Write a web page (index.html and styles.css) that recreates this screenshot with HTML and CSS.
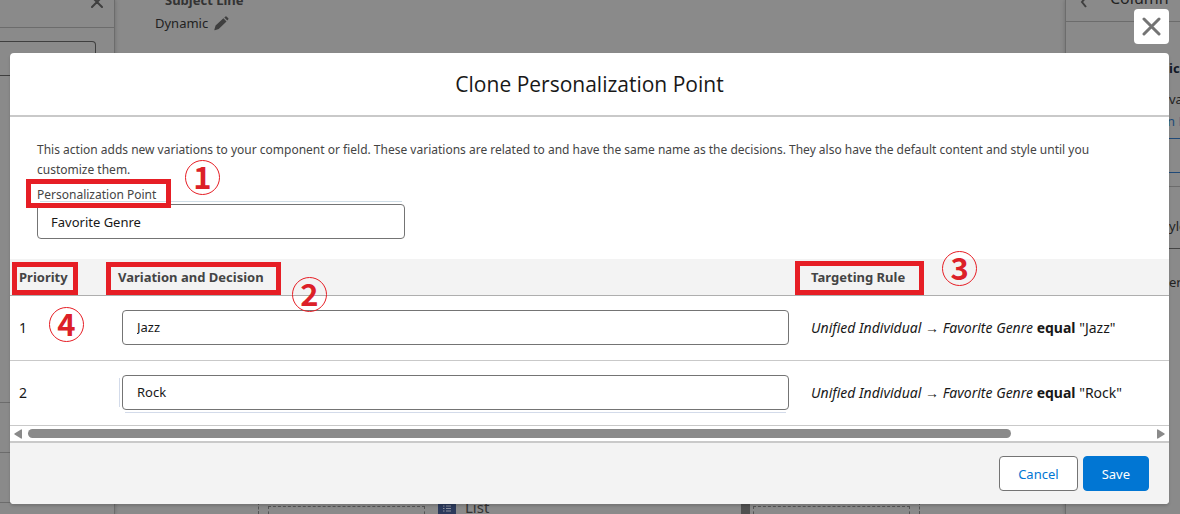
FILE: index.html
```html
<!DOCTYPE html>
<html lang="en">
<head>
<meta charset="utf-8">
<title>Clone Personalization Point</title>
<link rel="stylesheet" href="styles.css">
</head>
<body>
<div class="app">
  <aside class="left-panel">
    <div class="left-head">
      <svg class="left-close" width="12" height="12" viewBox="0 0 12 12"><path d="M1 1L11 11M11 1L1 11" stroke="#3f3f3f" stroke-width="2" stroke-linecap="round"/></svg>
    </div>
    <div class="left-search"></div>
    <div class="left-list"><div class="left-item"></div><div class="left-item"></div></div>
  </aside>
  <section class="canvas">
    <div class="subject">
      <div class="subject-title">Subject Line</div>
      <div class="subject-value">Dynamic
        <svg width="15" height="15" viewBox="0 0 15 15" fill="#3f3f3f"><path d="M1.600 9.600L9.400 2.300L12.500 5.400L4.700 13L.8 14.200Q.2 14.300.4 13.600ZM10.300 1.400L11.500.4Q12 0 12.500.5L14.300 2.300Q14.800 2.800 14.300 3.300L13.300 4.500Z"/></svg>
      </div>
    </div>
    <div class="blocks">
      <div class="block block-first"><div class="block-inner"></div></div>
      <div class="list-block">
        <svg width="18" height="18" viewBox="0 0 18 18"><rect width="18" height="18" rx="1" fill="#2c3a5c"/><path d="M5 4H6.500M8 4H13M5 6.500H6.500M8 6.500H13M5 9H6.500M8 9H13" stroke="#8a8f9c"/></svg>
        <span>List</span>
      </div>
      <div class="canvas-scroll"></div>
      <div class="block block-last"><div class="block-inner"></div></div>
    </div>
  </section>
  <aside class="right-panel">
    <div class="right-head">
      <svg width="8" height="12" viewBox="0 0 8 12"><path d="M6 1L2 6L6 11" fill="none" stroke="#3f3f3f" stroke-width="2"/></svg>
      <span>Column</span>
    </div>
    <div class="right-body">
      <div class="frag frag-bold">ic</div>
      <div class="frag">va</div>
      <div class="frag frag-link">n M</div>
      <div class="right-field"></div>
      <div class="right-section"><div class="frag">yle</div></div>
      <div class="right-section right-last"><div class="frag">er</div></div>
    </div>
  </aside>
</div>

<div class="stage">
  <div class="modal" role="dialog" aria-labelledby="title">
    <button class="close" type="button" aria-label="Close">
      <svg width="19" height="19" viewBox="0 0 19 19"><path d="M2 2L17 17M17 2L2 17" stroke="#747474" stroke-width="3" stroke-linecap="round"/></svg>
    </button>
    <header class="modal-head"><h1 id="title">Clone Personalization Point</h1></header>
    <div class="intro">
      <p>This action adds new variations to your component or field. These variations are related to and have the same name as the decisions. They also have the default content and style until you customize them.</p>
      <div class="label-row"><label class="mark mark-label" for="point">Personalization Point</label><span class="ring ring-1">1</span></div>
      <div class="point-field"><input id="point" class="text-box" type="text" value="Favorite Genre"></div>
    </div>
    <table class="rules">
      <colgroup><col class="col-priority"><col class="col-variation"><col></colgroup>
      <thead>
        <tr>
          <th><span class="mark mark-priority">Priority</span><span class="ring ring-4">4</span></th>
          <th><span class="mark mark-variation">Variation and Decision</span><span class="ring ring-2">2</span></th>
          <th><span class="mark mark-rule">Targeting Rule</span><span class="ring ring-3">3</span></th>
        </tr>
      </thead>
      <tbody>
        <tr>
          <td>1</td>
          <td class="cell-input"><input class="text-box" type="text" aria-label="Variation 1" value="Jazz"></td>
          <td><em>Unified Individual → Favorite Genre</em> <strong>equal</strong> "Jazz"</td>
        </tr>
        <tr>
          <td>2</td>
          <td class="cell-input"><div class="ghost"><input class="text-box" type="text" aria-label="Variation 2" value="Rock"></div></td>
          <td><em>Unified Individual → Favorite Genre</em> <strong>equal</strong> "Rock"</td>
        </tr>
      </tbody>
    </table>
    <div class="scrollbar">
      <svg width="8" height="10" viewBox="0 0 8 10"><path d="M7 .5Q8 0 8 1V9Q8 10 7 9.500L.5 5.500Q0 5 .5 4.500Z" fill="#8a8a8a"/></svg>
      <div class="track"><div class="thumb"></div></div>
      <svg width="8" height="10" viewBox="0 0 8 10"><path d="M1 .5Q0 0 0 1V9Q0 10 1 9.500L7.500 5.500Q8 5 7.500 4.500Z" fill="#8a8a8a"/></svg>
    </div>
    <footer class="modal-foot">
      <button class="btn" type="button">Cancel</button>
      <button class="btn btn-save" type="button">Save</button>
    </footer>
  </div>
</div>
</body>
</html>
```
FILE: styles.css
```css
* { box-sizing: border-box; }
body {
  margin: 0;
  min-height: 100vh;
  position: relative;
  background: #8a8a8a;
  color: #181818;
  font: 13px/20px "Noto Sans", "Open Sans", sans-serif;
}

/* dimmed application behind the dialog */
.app { position: absolute; inset: 0; display: flex; overflow: hidden; color: #222; }
.left-panel {
  width: 115px;
  flex: none;
  display: flex;
  flex-direction: column;
  border-right: 1px solid #6c6c6c;
  box-shadow: 1px 0 3px #777;
}
.left-head { height: 28px; flex: none; padding: 0 11px; border-bottom: 1px solid #6c6c6c; text-align: right; }
.left-close { display: block; margin: -4px 0 0 auto; }
.left-search {
  height: 35px;
  flex: none;
  margin: 13px 18px 0 0;
  border: 1px solid #3f3f3f;
  border-left: 0;
  border-radius: 0 4px 4px 0;
}
.left-list { margin-top: auto; height: 112px; border-top: 1px solid #6c6c6c; }
.left-item { height: 50px; border-bottom: 1px solid #6c6c6c; }
.canvas { flex: 1; display: flex; flex-direction: column; justify-content: space-between; }
.subject { margin: -10px 0 0 40px; }
.subject-title { padding-left: 10px; font-weight: 700; color: #333; }
.subject-value { display: flex; align-items: center; gap: 6px; line-height: 26px; }
.blocks {
  display: grid;
  grid-template-columns: 18fr 303px 9px 17fr;
  grid-template-rows: 12px;
  overflow: hidden;
  padding: 0 145px 0 143px;
}
.block { padding-top: 4px; border: 0 dashed #555; }
.block-first { padding-left: 9px; padding-right: 13px; border-left-width: 1px; }
.block-last { padding-left: 3px; padding-right: 9px; border-right-width: 1px; }
.block-inner { height: 30px; border: 1px dashed #555; }
.list-block { display: flex; gap: 9px; font-size: 15px; line-height: 10px; color: #333; }
.canvas-scroll { background: #505050; }
.right-panel { width: 115px; flex: none; border-left: 1px solid #6c6c6c; box-shadow: -1px 0 3px #777; }
.right-head { display: flex; height: 22px; padding-left: 14px; gap: 22px; border-bottom: 1px solid #6c6c6c; font-size: 16px; }
.right-head svg { margin-top: -4px; }
.right-head span { margin-top: -12px; }
.right-body { padding-top: 35px; }
.frag { padding-left: 103px; height: 22px; line-height: 22px; white-space: nowrap; }
.frag-bold { height: 31px; font-weight: 700; color: #111827; }
.frag-link { padding-left: 101px; color: #204a78; }
.right-field { height: 35px; margin-top: 6px; border: 1px solid #204a78; border-width: 1px 0; }
.right-section { margin-top: 13px; height: 49px; padding-top: 28px; border-top: 1px solid #6c6c6c; }
.right-last { border-color: #444; padding-top: 22px; }

/* dialog */
.stage { position: relative; padding: 53px 11px 10px 10px; }
.modal {
  position: relative;
  background: #fff;
  border-radius: 4px;
  box-shadow: 0 2px 3px rgba(0, 0, 0, .16);
}
.close {
  position: absolute;
  right: 0;
  top: -44px;
  width: 35px;
  height: 35px;
  display: grid;
  place-items: center;
  padding: 0;
  border: 0;
  border-radius: 4px;
  background: #fff;
}
.modal-head { padding: 16px; border-bottom: 2px solid #c9c9c9; text-align: center; }
h1 { margin: 0; font: 400 21px/30px "Open Sans", "Noto Sans", sans-serif; }
.intro { padding: 23px 27px 20px; color: #444; font-size: 12px; }
p { margin: 0; }
.label-row { display: flex; line-height: 30px; height: 24px; position: relative; z-index: 1; }
.point-field { position: relative; width: 33.300%; min-width: 240px; }
.point-field::before { content: ""; position: absolute; left: 3px; right: 3px; top: -3px; height: 1px; background: #cfdde6; }
.text-box {
  display: block;
  width: 100%;
  height: 35px;
  padding: 0 14px;
  border: 1px solid #747474;
  border-radius: 4px;
  background: #fff;
  color: #181818;
  font: 13px/20px "Noto Sans", "Open Sans", sans-serif;
}
.point-field .text-box { padding: 0 13px; }
.rules { width: 100%; table-layout: fixed; border-collapse: separate; border-spacing: 0; }
.col-priority { width: 98px; }
.col-variation { width: 59.800%; }
th { height: 37px; padding: 0 10px; background: #f3f3f3; border-bottom: 1px solid #aeaeae; text-align: left; color: #444; position: relative; }
td { height: 65px; padding: 0 10px; border-bottom: 1px solid #c9c9c9; font-size: 14px; }
th:first-child, td:first-child { padding-left: 9px; }
.cell-input { padding: 0 12px 2px 14px; }
.ghost { position: relative; }
.ghost::before { content: ""; position: absolute; left: -3px; top: 3px; bottom: 3px; width: 1px; background: #d3dbea; }
.ghost::after { content: ""; position: absolute; left: 3px; right: 3px; bottom: -3px; height: 1px; background: #d3dbea; }
.scrollbar { display: flex; align-items: center; gap: 6px; height: 15px; padding: 0 4px; }
.track { flex: 1; }
.thumb { width: 87.500%; height: 9px; border-radius: 5px; background: #8a8a8a; }
.modal-foot {
  display: flex;
  justify-content: flex-end;
  gap: 5px;
  padding: 13px 20px;
  border-top: 2px solid #c9c9c9;
  border-radius: 0 0 4px 4px;
  background: #f3f3f3;
}
.btn {
  height: 35px;
  padding: 0 18px;
  border: 1px solid #747474;
  border-radius: 4px;
  background: #fff;
  color: #0176d3;
  font: inherit;
}
.btn-save { border-color: #0176d3; background: #0176d3; color: #fff; }

/* callouts */
.mark { position: relative; }
.mark::after { content: ""; position: absolute; border: 5px solid #e61e25; }
.mark-label::after { inset: -1px -15px -4px -11px; }
.mark-priority::after { inset: -6px -10px -9px -7px; }
.mark-variation::after { inset: -6px -17px -9px -12px; }
.mark-rule::after { inset: -7px -19px -9px -16px; }
.ring {
  position: absolute;
  display: grid;
  place-items: center;
  width: 35px;
  height: 35px;
  padding-bottom: 4px;
  border: 1px solid #e61e25;
  border-radius: 50%;
  color: #dc2028;
  font: 700 31px/29px "Noto Sans CJK JP", sans-serif;
}
.ring-1 { left: 148px; top: -20px; }
.ring-2 { left: 184px; top: 18px; }
.ring-3 { left: 141px; top: -8px; }
.ring-4 { left: 39px; top: 48px; }
```
